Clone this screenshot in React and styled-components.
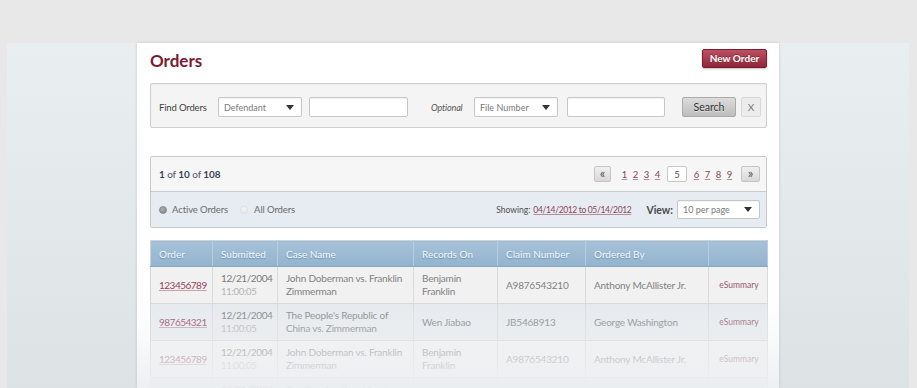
import React from 'react';
import styled, { createGlobalStyle } from 'styled-components';

const Global = createGlobalStyle`
  html, body { margin: 0; padding: 0; background: #e8e8e9; overflow: hidden; }
  body { font-family: Lato, "Open Sans", sans-serif; }
  * { box-sizing: border-box; }
`;

const Page = styled.div`
  padding-top: 43px;
  height: 388px;
`;

const Band = styled.div`
  margin-left: 7px;
  width: 902px;
  height: 345px;
  background: linear-gradient(#e9eef0, #dde2e5);
  display: flex;
  justify-content: center;
`;

const Card = styled.div`
  position: relative;
  width: 642px;
  height: 345px;
  padding: 0 12px 0 13px;
  background: #fff;
  box-shadow: 0 0 3px rgba(0, 0, 0, 0.14);
  overflow: hidden;
`;

const Fade = styled.div`
  position: absolute;
  left: 0;
  right: 0;
  bottom: 0;
  height: 96px;
  pointer-events: none;
  background: linear-gradient(
    rgba(242, 244, 246, 0) 0%,
    rgba(240, 242, 244, 0.35) 45%,
    rgba(238, 240, 242, 0.72) 75%,
    rgba(236, 239, 241, 0.93) 100%
  );
`;

const Header = styled.div`
  display: flex;
  justify-content: space-between;
  align-items: flex-start;
  height: 40px;
  padding-top: 6px;
`;

const Title = styled.h1`
  margin: 2px 0 0;
  font: 700 17px/20px Lato, sans-serif;
  color: #7b1b31;
`;

const NewOrder = styled.button`
  width: 65px;
  height: 19px;
  padding: 0;
  border: 1px solid #7c1b2f;
  border-radius: 2px;
  background: linear-gradient(#bd5063, #8e2538);
  color: #fff;
  font: 700 10px/17px Lato, sans-serif;
  text-shadow: 0 -1px 0 rgba(0, 0, 0, 0.3);
  box-shadow: 0 1px 2px rgba(0, 0, 0, 0.25);
`;

const FindBar = styled.div`
  display: flex;
  align-items: center;
  height: 45px;
  padding: 3px 5px 0 8px;
  border: 1px solid #cfcfcf;
  border-radius: 2px;
  background: #f4f4f4;
  box-shadow: inset 0 1px 2px rgba(0, 0, 0, 0.04), 0 1px 0 #fff;
`;

const Label = styled.span`
  flex: none;
  width: ${(p) => p.$w}px;
  margin-left: ${(p) => p.$ml || 0}px;
  color: ${(p) => (p.$italic ? '#555' : '#3f3f3f')};
  font-style: ${(p) => (p.$italic ? 'italic' : 'normal')};
  font-size: ${(p) => (p.$italic ? '9px' : '9.5px')};
  letter-spacing: -0.15px;
`;

const SelectBox = styled.div`
  flex: none;
  display: flex;
  align-items: center;
  justify-content: space-between;
  width: ${(p) => p.$w}px;
  height: ${(p) => p.$h || 20}px;
  margin-left: ${(p) => p.$ml || 0}px;
  padding: 0 7px 0 5px;
  background: #fff;
  border: 1px solid #c7c7c7;
  border-radius: 2px;
  box-shadow: inset 0 1px 1px rgba(0, 0, 0, 0.05);
  font-size: 9px;
  color: #7a7a7a;
`;

const TextInput = styled.input`
  flex: none;
  width: ${(p) => p.$w}px;
  height: 20px;
  margin-left: ${(p) => p.$ml || 0}px;
  padding: 0 4px;
  background: #fff;
  border: 1px solid #c7c7c7;
  border-radius: 2px;
  box-shadow: inset 0 1px 1px rgba(0, 0, 0, 0.05);
  outline: none;
`;

const SearchButton = styled.button`
  flex: none;
  width: 54px;
  height: 20px;
  margin-left: 17px;
  padding: 0;
  border: 1px solid #aaaaaa;
  border-radius: 2px;
  background: linear-gradient(#dcdcdc, #bdbdbd);
  font: 400 10.5px/18px Lato, sans-serif;
  color: #333;
  text-shadow: 0 1px 0 rgba(255, 255, 255, 0.5);
`;

const ClearButton = styled.button`
  flex: none;
  width: 20px;
  height: 20px;
  margin-left: 5px;
  padding: 0;
  border: 1px solid #d8d8d8;
  border-radius: 2px;
  background: #ececec;
  font: 400 10px/18px Lato, sans-serif;
  color: #777;
`;

const Pager = styled.div`
  margin-top: 28px;
  border: 1px solid #c9c9c9;
  border-radius: 2px;
  overflow: hidden;
`;

const PagerTop = styled.div`
  display: flex;
  align-items: center;
  justify-content: space-between;
  height: 35px;
  padding: 0 6px 0 8px;
  background: #f6f6f6;
  border-bottom: 1px solid #c5cbd2;
`;

const Count = styled.span`
  font-size: 10px;
  color: #4d5562;
  letter-spacing: -0.1px;
  b { font-weight: 700; color: #3a4656; }
`;

const Pages = styled.div`
  display: flex;
  align-items: center;
`;

const ArrowBtn = styled.span`
  display: flex;
  align-items: center;
  justify-content: center;
  width: ${(p) => p.$w || 17}px;
  height: 16px;
  margin-left: ${(p) => p.$ml || 0}px;
  margin-right: ${(p) => p.$mr || 0}px;
  padding-bottom: 2px;
  border: 1px solid #c4c4c4;
  border-radius: 2px;
  background: linear-gradient(#f0f0f0, #d8d8d8);
  font-size: 13px;
  line-height: 1;
  color: #555;
`;

const PageLink = styled.a`
  width: 11px;
  text-align: center;
  font-size: 9.5px;
  color: #8a4556;
  text-decoration: underline;
  text-decoration-color: #b78e98;
`;

const CurrentPage = styled.span`
  display: flex;
  align-items: center;
  justify-content: center;
  width: 20px;
  height: 16px;
  margin: 0 4px;
  border: 1px solid #c9c9c9;
  border-radius: 2px;
  background: #fff;
  font-size: 9.5px;
  color: #555;
`;

const PagerBottom = styled.div`
  display: flex;
  align-items: center;
  justify-content: space-between;
  height: 35px;
  padding: 0 6px 0 8px;
  background: #e6ecf2;
`;

const Group = styled.div`
  display: flex;
  align-items: center;
`;

const Radio = styled.span`
  flex: none;
  width: 8px;
  height: 8px;
  margin-left: ${(p) => p.$ml || 0}px;
  border-radius: 50%;
  background: ${(p) =>
    p.$on
      ? 'radial-gradient(circle at 40% 35%, #b0b0b0, #7d7d7d)'
      : 'linear-gradient(#f6f6f6, #e6e6e6)'};
  border: 1px solid ${(p) => (p.$on ? '#8a8a8a' : '#dedede')};
`;

const RadioLabel = styled.span`
  margin-left: ${(p) => p.$ml}px;
  font-size: 9.5px;
  letter-spacing: -0.1px;
  color: #6b6b6b;
`;

const Small = styled.span`
  font-size: 8.5px;
  color: #4d4d4d;
`;

const DateLink = styled.a`
  margin-left: 3px;
  font-size: 8.5px;
  letter-spacing: -0.35px;
  color: #8a4556;
  text-decoration: underline;
  text-decoration-color: #b78e98;
`;

const ViewLabel = styled.span`
  margin-left: 15px;
  margin-right: 4px;
  font-size: 10.5px;
  font-weight: 700;
  color: #4a4a4a;
`;

const Table = styled.table`
  width: 617px;
  margin-top: 12px;
  border-collapse: collapse;
  table-layout: fixed;
  border: 1px solid #d3d3d3;
`;

const Th = styled.th`
  width: ${(p) => p.$w}px;
  height: 26px;
  padding: 0 7px 0 8px;
  text-align: left;
  font: 400 10px Lato, sans-serif;
  color: #f6f9fc;
  text-shadow: 0 1px 1px rgba(60, 95, 130, 0.45);
  background: linear-gradient(#a6c2da, #93b3cd);
  border-right: 1px solid #b8cde0;
  border-bottom: 1px solid #88a8c2;
`;

const Tr = styled.tr`
  height: 37px;
  background: ${(p) => (p.$alt ? '#e6eaee' : '#f1f1f1')};
`;

const Td = styled.td`
  padding: 0 6px 0 8px;
  vertical-align: middle;
  font-size: 10px;
  letter-spacing: -0.2px;
  line-height: 13px;
  white-space: nowrap;
  overflow: hidden;
  color: #828282;
  border-right: 1px solid #dadada;
  border-bottom: 1px solid #d4d6d8;
  text-align: ${(p) => (p.$center ? 'center' : 'left')};
`;

const Line = styled.div``;

const OrderLink = styled.a`
  font-size: 10px;
  letter-spacing: -0.5px;
  color: #944456;
  text-decoration: underline;
  text-decoration-color: #c4a0a8;
`;

const DateText = styled.div`
  letter-spacing: -0.4px;
  color: #7a7a7a;
`;

const Time = styled.div`
  color: #b3b3b3;
  font-size: 9.5px;
  letter-spacing: -0.3px;
`;

const Summary = styled.a`
  font-size: 8.5px;
  letter-spacing: 0;
  color: #965a6a;
  text-decoration: none;
`;

const Caret = () => (
  <svg width="8" height="5" viewBox="0 0 8 5">
    <path d="M0 0 H8 L4 5 Z" fill="#333" />
  </svg>
);

const rowA = {
  id: '123456789',
  caseName: ['John Doberman vs. Franklin', 'Zimmerman'],
  records: ['Benjamin', 'Franklin'],
  claim: 'A9876543210',
  by: 'Anthony McAllister Jr.',
};
const rowB = {
  id: '987654321',
  caseName: ["The People's Republic of", 'China vs. Zimmerman'],
  records: ['Wen Jiabao'],
  claim: 'JB5468913',
  by: 'George Washington',
};
const rows = [rowA, rowB, rowA, rowB];

const cols = [
  ['Order', 62],
  ['Submitted', 65],
  ['Case Name', 136],
  ['Records On', 84],
  ['Claim Number', 88],
  ['Ordered By', 123],
  ['', 59],
];

export default function App() {
  return (
    <Page>
      <Global />
      <Band>
        <Card>
          <Header>
            <Title>Orders</Title>
            <NewOrder>New Order</NewOrder>
          </Header>

          <FindBar>
            <Label $w={59}>Find Orders</Label>
            <SelectBox $w={84}>
              Defendant <Caret />
            </SelectBox>
            <TextInput $w={99} $ml={7} />
            <Label $w={43} $ml={23} $italic>
              Optional
            </Label>
            <SelectBox $w={84}>
              File Number <Caret />
            </SelectBox>
            <TextInput $w={98} $ml={9} />
            <SearchButton>Search</SearchButton>
            <ClearButton>X</ClearButton>
          </FindBar>

          <Pager>
            <PagerTop>
              <Count>
                <b>1</b> of <b>10</b> of <b>108</b>
              </Count>
              <Pages>
                <ArrowBtn $mr={8}>«</ArrowBtn>
                {[1, 2, 3, 4].map((n) => (
                  <PageLink key={n}>{n}</PageLink>
                ))}
                <CurrentPage>5</CurrentPage>
                {[6, 7, 8, 9].map((n) => (
                  <PageLink key={n}>{n}</PageLink>
                ))}
                <ArrowBtn $w={19} $ml={6}>»</ArrowBtn>
              </Pages>
            </PagerTop>
            <PagerBottom>
              <Group>
                <Radio $on />
                <RadioLabel $ml={5}>Active Orders</RadioLabel>
                <Radio $ml={12} />
                <RadioLabel $ml={6}>All Orders</RadioLabel>
              </Group>
              <Group>
                <Small>Showing:</Small>
                <DateLink>04/14/2012 to 05/14/2012</DateLink>
                <ViewLabel>View:</ViewLabel>
                <SelectBox $w={83} $h={19}>
                  10 per page <Caret />
                </SelectBox>
              </Group>
            </PagerBottom>
          </Pager>

          <Table>
            <thead>
              <tr>
                {cols.map(([c, w], i) => (
                  <Th key={i} $w={w}>
                    {c}
                  </Th>
                ))}
              </tr>
            </thead>
            <tbody>
              {rows.map((r, i) => (
                <Tr key={i} $alt={i % 2 === 1}>
                  <Td>
                    <OrderLink>{r.id}</OrderLink>
                  </Td>
                  <Td>
                    <DateText>12/21/2004</DateText>
                    <Time>11:00:05</Time>
                  </Td>
                  <Td>
                    {r.caseName.map((l, j) => (
                      <Line key={j}>{l}</Line>
                    ))}
                  </Td>
                  <Td>
                    {r.records.map((l, j) => (
                      <Line key={j}>{l}</Line>
                    ))}
                  </Td>
                  <Td>{r.claim}</Td>
                  <Td>{r.by}</Td>
                  <Td $center>
                    <Summary>eSummary</Summary>
                  </Td>
                </Tr>
              ))}
            </tbody>
          </Table>
          <Fade />
        </Card>
      </Band>
    </Page>
  );
}
